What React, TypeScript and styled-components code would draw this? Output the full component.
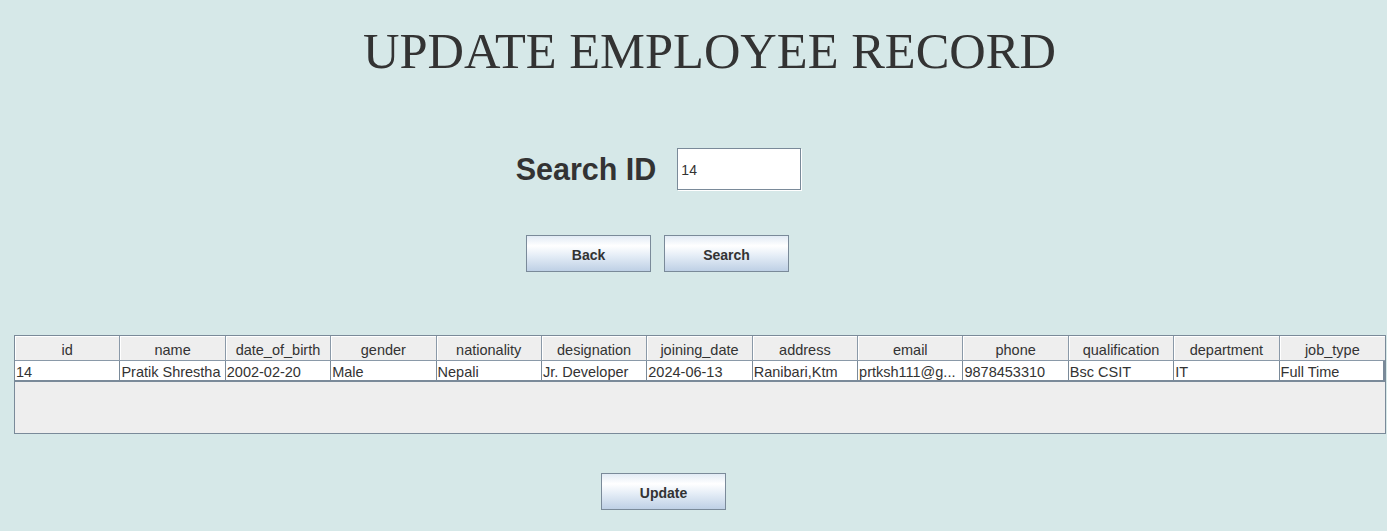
import React from "react";
import styled, { createGlobalStyle } from "styled-components";

const GlobalStyle = createGlobalStyle`
  html, body {
    margin: 0;
    padding: 0;
    background: #d6e8e8;
  }
  body {
    font-family: "Liberation Sans", Arial, sans-serif;
    color: #333333;
  }
`;

const Page = styled.div`
  display: flex;
  flex-direction: column;
  align-items: center;
  min-height: 531px;
`;

// shift moves the centre of a row away from the page centre
const Row = styled.div<{ $shift?: number; $top: number; $gap?: number }>`
  display: flex;
  align-items: center;
  gap: ${({ $gap }) => $gap ?? 0}px;
  margin-top: ${({ $top }) => $top}px;
  ${({ $shift = 0 }) =>
    $shift >= 0 ? `margin-left: ${$shift * 2}px;` : `margin-right: ${-$shift * 2}px;`}
`;

const Title = styled.h1`
  margin: 0;
  font-family: "Liberation Serif", "Times New Roman", serif;
  font-weight: normal;
  font-size: 50.5px;
  line-height: 50px;
  color: #333333;
`;

const Label = styled.span`
  font-size: 30.5px;
  font-weight: bold;
  color: #333333;
  margin-right: 21px;
`;

const Field = styled.input`
  box-sizing: border-box;
  width: 124px;
  height: 42px;
  border: 1px solid #7a8a99;
  box-shadow: 1px 1px 0 #ffffff;
  background: #ffffff;
  padding: 2px 0 0 3px;
  font-family: "Liberation Sans", Arial, sans-serif;
  font-size: 14px;
  color: #333333;
  outline: none;
`;

const Button = styled.button`
  box-sizing: border-box;
  width: 125px;
  height: 37px;
  border: 1px solid #7a8a99;
  background: linear-gradient(
    to bottom,
    #e2ebf5 0%,
    #ffffff 28%,
    #e6eef7 55%,
    #bed0e5 100%
  );
  font-family: "Liberation Sans", Arial, sans-serif;
  font-size: 14px;
  font-weight: bold;
  color: #333333;
  padding: 2px 0 0;
  cursor: pointer;
`;

const Table = styled.div`
  align-self: stretch;
  margin: 63px 1px 0 14px;
  border: 1px solid #7a8a99;
  background: #eeeeee;
  height: 97px;
  display: flex;
  flex-direction: column;
`;

const Grid = styled.div<{ $head?: boolean }>`
  display: grid;
  grid-template-columns: repeat(13, 1fr);
  background: ${({ $head }) => ($head ? "#eeeeee" : "#ffffff")};
  border-bottom: ${({ $head }) => ($head ? "1px solid #8a99a8" : "2px solid #7a8a99")};
  height: ${({ $head }) => ($head ? 24 : 19)}px;
`;

const HeadCell = styled.div`
  border-right: 1px solid #8a99a8;
  box-shadow: inset 1px 1px 0 #ffffff;
  text-align: center;
  font-size: 14.5px;
  line-height: 29px;
  color: #333333;
  white-space: nowrap;
  overflow: hidden;
  &:last-child {
    border-right: none;
  }
`;

const Cell = styled.div`
  border-right: 1px solid #7a8a99;
  padding-left: 1px;
  font-size: 14.5px;
  line-height: 22px;
  color: #333333;
  white-space: nowrap;
  overflow: hidden;
  &:last-child {
    border-right: 2px solid #7a8a99;
  }
`;

const columns = [
  "id",
  "name",
  "date_of_birth",
  "gender",
  "nationality",
  "designation",
  "joining_date",
  "address",
  "email",
  "phone",
  "qualification",
  "department",
  "job_type",
];

const record = [
  "14",
  "Pratik Shrestha",
  "2002-02-20",
  "Male",
  "Nepali",
  "Jr. Developer",
  "2024-06-13",
  "Ranibari,Ktm",
  "prtksh111@g...",
  "9878453310",
  "Bsc CSIT",
  "IT",
  "Full Time",
];

const App = () => {
  return (
    <React.Fragment>
      <GlobalStyle />
      <Page>
        <Row $top={26} $shift={16}>
          <Title>UPDATE EMPLOYEE RECORD</Title>
        </Row>
        <Row $top={72} $shift={-35}>
          <Label>Search ID</Label>
          <Field defaultValue="14" />
        </Row>
        <Row $top={45} $shift={-36} $gap={13}>
          <Button>Back</Button>
          <Button>Search</Button>
        </Row>
        <Table>
          <Grid $head>
            {columns.map((c) => (
              <HeadCell key={c}>{c}</HeadCell>
            ))}
          </Grid>
          <Grid>
            {record.map((v, i) => (
              <Cell key={i}>{v}</Cell>
            ))}
          </Grid>
        </Table>
        <Row $top={39} $shift={-30}>
          <Button>Update</Button>
        </Row>
      </Page>
    </React.Fragment>
  );
};

export default App;
